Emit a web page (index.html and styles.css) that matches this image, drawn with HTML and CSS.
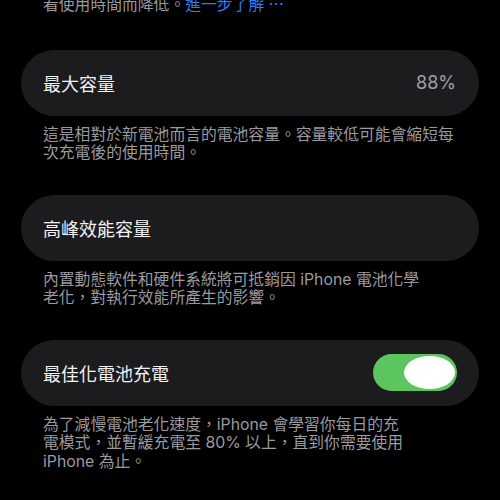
FILE: index.html
```html
<!DOCTYPE html>
<html lang="zh-Hant">
<head>
<meta charset="utf-8">
<link rel="stylesheet" href="styles.css">
</head>
<body>
<div class="page">
  <p class="note top">看使用時間而降低。<span class="link">進一步了解</span><span class="dots">⋯</span></p>

  <section class="group">
    <div class="card">
      <span class="title">最大容量</span>
      <span class="value">88%</span>
    </div>
    <p class="note">這是相對於新電池而言的電池容量。容量較低可能會縮短每<br>次充電後的使用時間。</p>
  </section>

  <section class="group">
    <div class="card">
      <span class="title">高峰效能容量</span>
    </div>
    <p class="note">內置動態軟件和硬件系統將可抵銷因 iPhone 電池化學<br>老化，對執行效能所產生的影響。</p>
  </section>

  <section class="group">
    <div class="card">
      <span class="title">最佳化電池充電</span>
      <span class="toggle"><span class="knob"></span></span>
    </div>
    <p class="note">為了減慢電池老化速度，iPhone 會學習你每日的充<br>電模式，並暫緩充電至 80% 以上，直到你需要使用<br>iPhone 為止。</p>
  </section>
</div>
</body>
</html>
```

FILE: styles.css
```css
html, body {
  margin: 0;
  padding: 0;
  background: #000;
  width: 500px;
  height: 500px;
  overflow: hidden;
}

.page {
  padding: 0 21px;
  font-family: "Inter", "Noto Sans CJK TC", sans-serif;
  display: flex;
  flex-direction: column;
  gap: 32px;
}

.note {
  margin: 0;
  padding: 0 22px;
  font-size: 15.8px;
  line-height: 18.5px;
  color: #9a9a9f;
  white-space: nowrap;
}

.top {
  margin-top: -4px;
  margin-bottom: 3px;
}

.link {
  color: #2f7cf6;
}

.dots {
  color: #2f7cf6;
  margin-left: 4px;
}

.group {
  display: flex;
  flex-direction: column;
  gap: 10px;
}

.card {
  height: 66px;
  border-radius: 33px;
  background: #1c1c1e;
  display: flex;
  align-items: center;
  justify-content: space-between;
  padding: 0 23px 0 22px;
}

.title {
  font-size: 18px;
  color: #f2f2f5;
}

.value {
  font-size: 18px;
  color: #a0a0a6;
}

.toggle {
  width: 84px;
  height: 37px;
  border-radius: 19px;
  background: #5cc55f;
  display: flex;
  align-items: center;
  justify-content: flex-end;
  padding: 0 2px;
  box-sizing: border-box;
  margin-right: -1px;
}

.knob {
  width: 51px;
  height: 33px;
  border-radius: 50%;
  background: #fff;
}
```
